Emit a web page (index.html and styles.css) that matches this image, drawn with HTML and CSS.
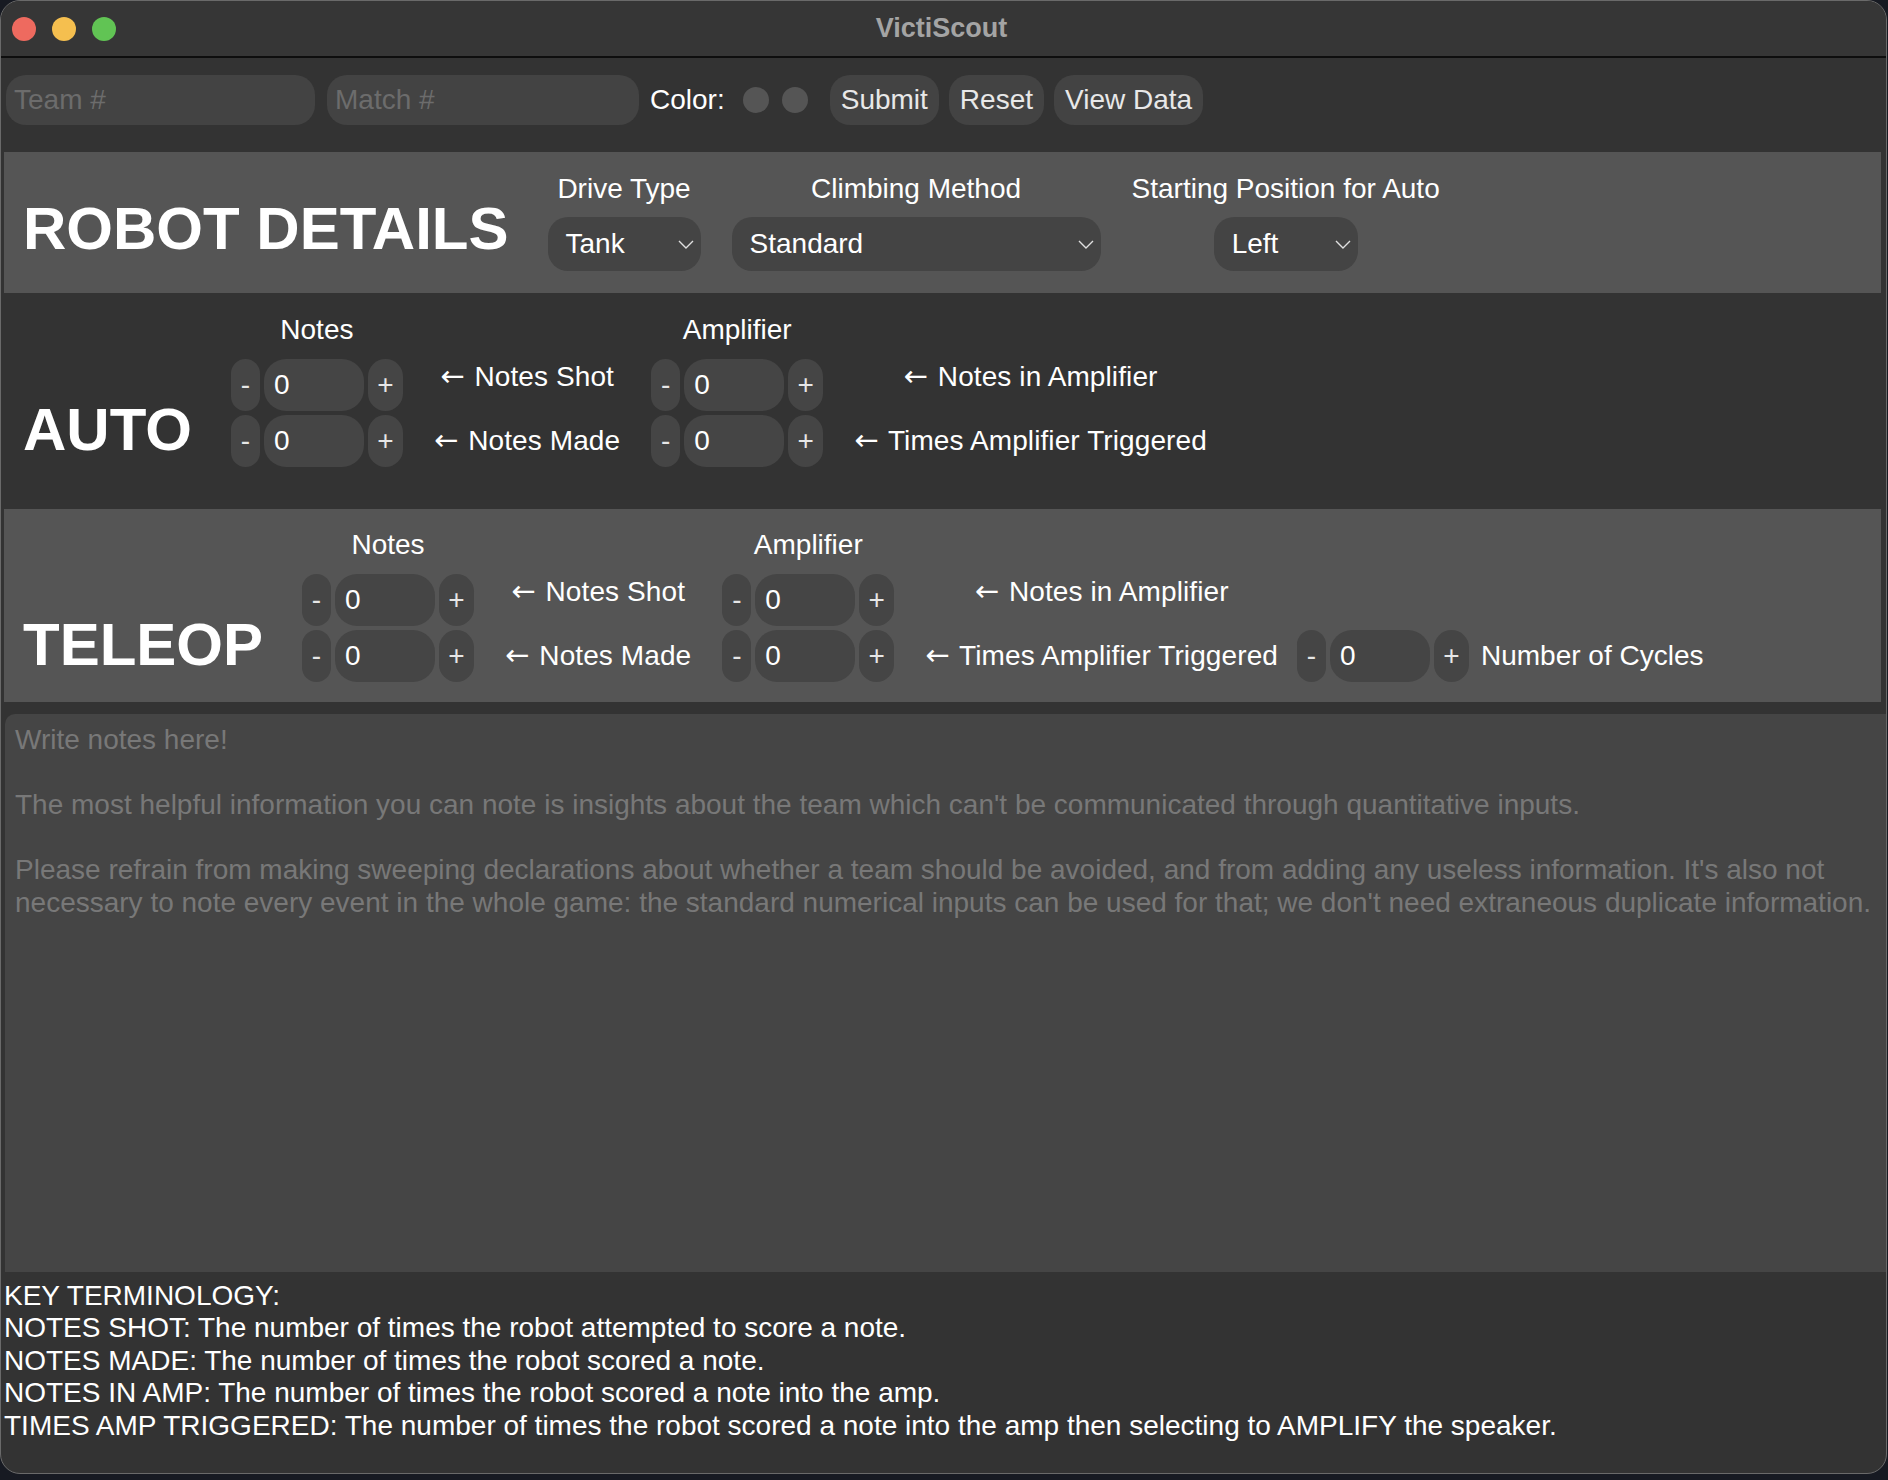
FILE: index.html
```html
<!DOCTYPE html>
<html>
<head>
<meta charset="utf-8">
<title>VictiScout</title>
<link rel="stylesheet" href="styles.css">
</head>
<body>
<div class="window">
  <div class="titlebar">
    <div class="lights">
      <span class="light red"></span>
      <span class="light yellow"></span>
      <span class="light green"></span>
    </div>
    <div class="title">VictiScout</div>
    <div></div>
  </div>
  <div class="main">
    <div class="toolbar">
      <div class="field team"><span class="ph">Team #</span></div>
      <div class="field match"><span class="ph">Match #</span></div>
      <span class="color-label">Color:</span>
      <span class="swatch"></span>
      <span class="swatch second"></span>
      <div class="btn submit">Submit</div>
      <div class="btn">Reset</div>
      <div class="btn">View Data</div>
    </div>

    <section class="panel light-panel robot">
      <h1 class="heading">ROBOT DETAILS</h1>
      <div class="field-col">
        <div class="col-label">Drive Type</div>
        <div class="select sel-tank"><span>Tank</span><svg class="chev" width="16" height="9" viewBox="0 0 16 9"><path d="M1 1 L8 8 L15 1" fill="none" stroke="#e0e0e0" stroke-width="1.4"/></svg></div>
      </div>
      <div class="field-col">
        <div class="col-label">Climbing Method</div>
        <div class="select sel-climb"><span>Standard</span><svg class="chev" width="16" height="9" viewBox="0 0 16 9"><path d="M1 1 L8 8 L15 1" fill="none" stroke="#e0e0e0" stroke-width="1.4"/></svg></div>
      </div>
      <div class="field-col">
        <div class="col-label">Starting Position for Auto</div>
        <div class="select sel-start"><span>Left</span><svg class="chev" width="16" height="9" viewBox="0 0 16 9"><path d="M1 1 L8 8 L15 1" fill="none" stroke="#e0e0e0" stroke-width="1.4"/></svg></div>
      </div>
    </section>

    <section class="panel auto">
      <h1 class="heading">AUTO</h1>
      <div class="counter-col">
        <div class="col-label">Notes</div>
        <div class="counter"><div class="cbtn">-</div><div class="cval">0</div><div class="cbtn plus">+</div></div>
        <div class="counter"><div class="cbtn">-</div><div class="cval">0</div><div class="cbtn plus">+</div></div>
      </div>
      <div class="desc-col"><span class="arrow">←</span> Notes Shot<br><br><span class="arrow">←</span> Notes Made</div>
      <div class="counter-col">
        <div class="col-label">Amplifier</div>
        <div class="counter"><div class="cbtn">-</div><div class="cval">0</div><div class="cbtn plus">+</div></div>
        <div class="counter"><div class="cbtn">-</div><div class="cval">0</div><div class="cbtn plus">+</div></div>
      </div>
      <div class="desc-col"><span class="arrow">←</span> Notes in Amplifier<br><br><span class="arrow">←</span> Times Amplifier Triggered</div>
    </section>

    <section class="panel light-panel teleop">
      <h1 class="heading">TELEOP</h1>
      <div class="counter-col">
        <div class="col-label">Notes</div>
        <div class="counter"><div class="cbtn">-</div><div class="cval">0</div><div class="cbtn plus">+</div></div>
        <div class="counter"><div class="cbtn">-</div><div class="cval">0</div><div class="cbtn plus">+</div></div>
      </div>
      <div class="desc-col"><span class="arrow">←</span> Notes Shot<br><br><span class="arrow">←</span> Notes Made</div>
      <div class="counter-col">
        <div class="col-label">Amplifier</div>
        <div class="counter"><div class="cbtn">-</div><div class="cval">0</div><div class="cbtn plus">+</div></div>
        <div class="counter"><div class="cbtn">-</div><div class="cval">0</div><div class="cbtn plus">+</div></div>
      </div>
      <div class="desc-col last-desc"><span class="arrow">←</span> Notes in Amplifier<br><br><span class="arrow">←</span> Times Amplifier Triggered</div>
      <div class="cycles">
        <div class="counter"><div class="cbtn">-</div><div class="cval">0</div><div class="cbtn plus">+</div></div>
        <span class="cycles-label">Number of Cycles</span>
      </div>
    </section>

    <div class="notes">Write notes here!<br><br>The most helpful information you can note is insights about the team which can't be communicated through quantitative inputs.<br><br>Please refrain from making sweeping declarations about whether a team should be avoided, and from adding any useless information. It's also not<br>necessary to note every event in the whole game: the standard numerical inputs can be used for that; we don't need extraneous duplicate information.</div>

    <div class="terms">KEY TERMINOLOGY:<br>NOTES SHOT: The number of times the robot attempted to score a note.<br>NOTES MADE: The number of times the robot scored a note.<br>NOTES IN AMP: The number of times the robot scored a note into the amp.<br>TIMES AMP TRIGGERED: The number of times the robot scored a note into the amp then selecting to AMPLIFY the speaker.</div>
  </div>
</div>
</body>
</html>
```

FILE: styles.css
```css
* { box-sizing: border-box; }
html, body { margin: 0; padding: 0; }
body {
  background: #171a22;
  font-family: "Liberation Sans", Arial, Helvetica, sans-serif;
  font-size: 28px;
  color: #ffffff;
  width: 1888px;
  height: 1480px;
  overflow: hidden;
}
.window {
  width: 1887px;
  height: 1474px;
  border: 1px solid #6a6a6a;
  border-radius: 20px;
  overflow: hidden;
  background: #333333;
  display: flex;
  flex-direction: column;
}
.titlebar {
  height: 57px;
  flex: none;
  background: #363636;
  border-bottom: 2px solid #0e0e0e;
  display: grid;
  grid-template-columns: 1fr auto 1fr;
  align-items: center;
}
.lights { display: flex; gap: 16px; padding-left: 11px; }
.light { width: 24px; height: 24px; border-radius: 50%; display: block; }
.red { background: #ee6a5f; }
.yellow { background: #f5bf4f; }
.green { background: #61c454; }
.title {
  font-weight: bold;
  font-size: 27px;
  color: #a4a4a4;
  padding-right: 4px;
}
.main {
  flex: 1;
  display: flex;
  flex-direction: column;
  padding: 0 0 0 1px;
}
.toolbar {
  display: flex;
  align-items: center;
  height: 50px;
  margin-top: 17px;
  padding-left: 4px;
}
.field {
  height: 50px;
  border-radius: 20px;
  background: #434343;
  display: flex;
  align-items: center;
  padding-left: 8px;
}
.team { width: 309px; margin-right: 12px; }
.match { width: 312px; margin-right: 11px; }
.ph { color: #6c6c6c; }
.color-label { margin-right: 18px; }
.swatch {
  width: 26px;
  height: 26px;
  border-radius: 50%;
  background: #555555;
  display: block;
}
.swatch.second { margin-left: 13px; margin-right: 22px; }
.btn {
  height: 50px;
  border-radius: 20px;
  background: #434343;
  color: #e8e8e8;
  display: flex;
  align-items: center;
  padding: 0 11px;
  margin-right: 10px;
}
.panel {
  display: flex;
  align-items: last baseline;
  margin: 0 5px 0 2px;
  padding: 21px 20px 22px 19px;
}
.light-panel { background: #555555; }
.robot { margin-top: 27px; }
.auto { padding-bottom: 42px; }
.teleop { padding-top: 20px; padding-bottom: 20px; }
.heading {
  font-size: 60px;
  font-weight: bold;
  margin: 0 39px 0 0;
  line-height: normal;
  white-space: nowrap;
}
.field-col {
  display: flex;
  flex-direction: column;
  align-items: center;
  margin-right: 31px;
}
.col-label { text-align: center; margin-bottom: 12px; }
.select {
  height: 54px;
  border-radius: 20px;
  background: #444444;
  display: flex;
  align-items: center;
  justify-content: space-between;
  padding: 0 7px 0 18px;
}
.sel-tank { width: 153px; }
.sel-climb { width: 369px; }
.sel-start { width: 144px; }
.chev { display: block; }
.counter-col {
  display: flex;
  flex-direction: column;
  align-items: center;
  margin-right: 31px;
}
.counter-col .col-label { margin-bottom: 13px; }
.counter {
  display: flex;
  height: 52px;
  gap: 4px;
}
.counter + .counter { margin-top: 4px; }
.cbtn {
  width: 29px;
  border-radius: 15px;
  background: #454545;
  display: flex;
  align-items: center;
  justify-content: center;
  color: #e6e6e6;
}
.cbtn.plus { width: 35px; border-radius: 18px; }
.cval {
  width: 100px;
  border-radius: 22px;
  background: #454545;
  display: flex;
  align-items: center;
  padding-left: 10px;
}
.desc-col {
  text-align: center;
  white-space: nowrap;
  margin-right: 31px;
  letter-spacing: 0.1px;
}
.arrow {
  font-family: "DejaVu Sans", sans-serif;
  font-size: 29px;
  line-height: 1;
  margin-right: 2px;
}
.last-desc { margin-right: 19px; }
.cycles {
  display: flex;
  align-items: baseline;
  gap: 12px;
}
.notes {
  margin: 12px 0 0 3px;
  height: 558px;
  background: #454545;
  border-radius: 10px 0 0 0;
  color: #787878;
  padding: 10px 10px;
  line-height: 32.5px;
  white-space: nowrap;
  overflow: hidden;
}
.terms {
  margin-top: 8px;
  padding-left: 2px;
  line-height: 32.4px;
  white-space: nowrap;
}
```
